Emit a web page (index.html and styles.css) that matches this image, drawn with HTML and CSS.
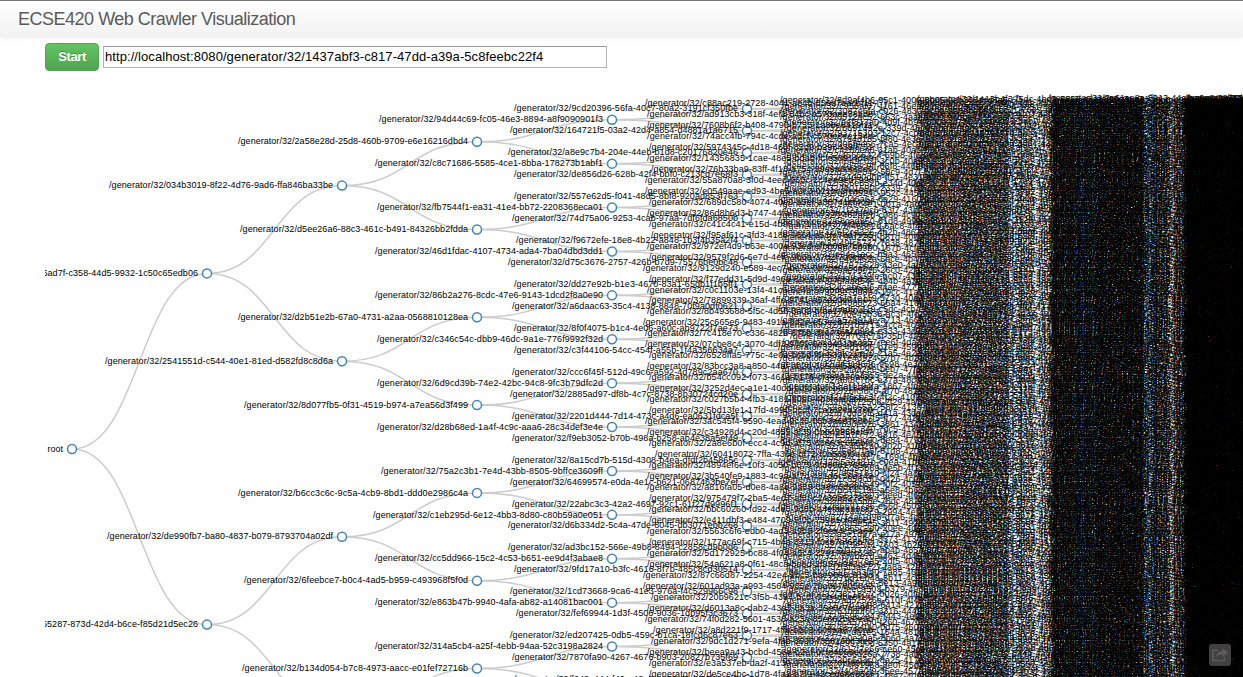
FILE: index.html
```html
<!DOCTYPE html>
<html lang="en">
<head>
<meta charset="utf-8">
<title>ECSE420 Web Crawler Visualization</title>
<link rel="stylesheet" href="styles.css">
</head>
<body>
<header class="navbar"><span class="brand">ECSE420 Web Crawler Visualization</span></header>
<main class="container">
  <form class="controls">
    <button class="btn" type="button">Start</button>
    <input class="url" type="text" spellcheck="false" value="http://localhost:8080/generator/32/1437abf3-c817-47dd-a39a-5c8feebc22f4">
  </form>
  <svg class="tree" width="1198" height="606" viewBox="45 71 1198 606"></svg>
</main>
<button class="share" type="button" aria-label="Share">
  <svg width="16" height="14" viewBox="0 0 16 14"><path d="M6 2.200H1v10.300h11.500V9.500" fill="none" stroke="currentColor" stroke-width="1.6"/><path d="M10.500 0 16 4.500 10.500 9V6.500C7.500 6.300 5.500 7.500 4 9.500 4.300 5.500 6.500 3 10.500 2.700Z" fill="currentColor"/></svg>
</button>
<script src="tree.js"></script>
</body>
</html>
```

FILE: styles.css
```css
html, body { height: 100%; }
body {
  margin: 0;
  overflow: hidden;
  background: #fff;
  font-family: "Liberation Sans", Arial, sans-serif;
}
.navbar {
  box-sizing: border-box;
  height: 37px;
  padding: 0 18px;
  border-top: 1px solid #777;
  background: linear-gradient(#fff, #f2f2f2);
  box-shadow: 0 1px 5px rgba(0, 0, 0, .065);
  line-height: 37px;
}
.brand {
  display: block;
  color: #5a5a5a;
  font-size: 18px;
  letter-spacing: -.49px;
  white-space: nowrap;
}
.container { padding-left: 45px; }
.controls {
  display: flex;
  align-items: center;
  gap: 4px;
  height: 28px;
  margin: 0;
  padding-top: 6px;
}
.btn {
  box-sizing: border-box;
  width: 54px;
  height: 28px;
  padding: 0 0 2px;
  border: 1px solid #51a351;
  border-radius: 4px;
  background: linear-gradient(#62c462, #51a351);
  color: #fff;
  font: bold 13px "Liberation Sans", Arial, sans-serif;
  letter-spacing: -.4px;
  text-shadow: 0 -1px 0 rgba(0, 0, 0, .25);
}
.url {
  box-sizing: border-box;
  width: 504px;
  height: 22px;
  padding: 0 1px 2px;
  border: 1px solid #b3b3b3;
  border-top-color: #999;
  background: #fff;
  color: #000;
  font: 13px "Liberation Sans", Arial, sans-serif;
  letter-spacing: .075px;
}
.tree { display: block; overflow: hidden; }
.link { fill: none; stroke: #ccc; stroke-width: 1.5px; }
.node circle { fill: #fff; stroke: steelblue; stroke-width: 1.5px; }
.node text {
  font: 9px "Liberation Sans", Arial, sans-serif;
  text-anchor: end;
  fill: #000;
}
.share {
  position: absolute;
  left: 1209px;
  top: 644px;
  display: flex;
  align-items: center;
  justify-content: center;
  width: 22px;
  height: 22px;
  padding: 0;
  border: 0;
  border-radius: 3px;
  background: #414141;
  color: #5c5c5c;
}
```

FILE: tree.js
```js
// Known page ids per tree level, top to bottom. A trailing ":n" fixes the
// number of "f" digits in the generated remainder of the id.
const ids = [
  ['root'],
  ['2e56ad7f-c358-44d5-9932-1c50c65edb06', 'c1a55287-873d-42d4-b6ce-f85d21d5ec26'],
  ['034b3019-8f22-4d76-9ad6-ffa846ba33be', '2541551d-c544-40e1-81ed-d582fd8c8d6a', 'de990fb7-ba80-4837-b079-8793704a02df'],
  ['2a58e28d-25d8-460b-9709-e6e16216dbd4', 'd5ee26a6-88c3-461c-b491-84326bb2fdda', 'd2b51e2b-67a0-4731-a2aa-0568810128ea', '8d077fb5-0f31-4519-b974-a7ea56d3f499', 'b6cc3c6c-9c5a-4cb9-8bd1-ddd0e2986c4a', '6feebce7-b0c4-4ad5-b959-c493968f5f0d', 'b134d054-b7c8-4973-aacc-e01fef72716b'],
  ['94d44c69-fc05-46e3-8894-a8f9090901f3', 'c8c71686-5585-4ce1-8bba-178273b1abf1', 'fb7544f1-ea31-41e4-bb72-2208368eca01', '46d1fdac-4107-4734-ada4-7ba04dbd3dd1', '86b2a276-8cdc-47e6-9143-1dcd2f8a0e90', 'c346c54c-dbb9-46dc-9a1e-776f9992f32d', '6d9cd39b-74e2-42bc-94c8-9fc3b79dfc2d', 'd28b68ed-1a4f-4c9c-aaa6-28c34def3e4e', '75a2c3b1-7e4d-43bb-8505-9bffce3609ff', 'c1eb295d-6e12-4bb3-8d80-c80b59a0e051', 'cc5dd966-15c2-4c53-b651-ee9d4f3abae8', 'e863b47b-9940-4afa-ab82-a14081bac001', '314a5cb4-a25f-4ebb-94aa-52c3198a2824'],
  ['9cd20396-56fa-40c7-80a2-3191cf350fbe', '164721f5-03a2-42d4-a854-d4881a1a6715', 'a8e9c7b4-204e-44eb-b1d8-c20176820e46', 'de856d26-628b-42f4-bbf0-c213cd7e68f3', '557e62d5-f041-48d5-8bf8-920ad853f763', '74d75a06-9253-4cab-97aa-7df6fda6850b', 'f9672efe-18e8-4b22-a848-1b3f4b35a2f4', 'd75c3676-2757-426b-b7d9-75576be0bc48', 'dd27e92b-b1e3-4670-83a1-65db1f1b5ff1', 'a6daac63-35c4-4138-8848-70f9a0df0621', '8f0f4075-b1c4-4e06-a60c-ab9722f7ae73', 'c3f44106-54cc-454f-a55b-1f4a356634a7', 'ccc6f45f-512d-49c6-a592-4d789c2aa670', '2885ad97-df8b-4c7c-8738-8b30724cd20e', '2201d444-7d14-473c-a4d6-ea0631fdca5f', 'f9eb3052-b70b-498a-b258-ab4e38a5ef49', '8a15cd7b-515d-4308-b4ea-dfdf2b45865c', '64699574-e0da-4e1c-b621-0687463be7ef', '22abc3c3-42a2-4697-92c1-61f27d9996f1', 'd6b334d2-5c4a-47de-8045-db3071ebb268', 'ad3bc152-566e-49b8-8494-c2858cd9b0d6', '9fd17a10-b3fc-4616-8f7b-485c8cd30514', '1cd73668-9ca6-41e3-976a-f4c529966c98', 'fef69944-1d3f-4506-9036-1db95f3c3673', 'ed207425-0db5-459c-b1ca-18fcd6c87e63', '7870fa90-4267-4676-b903-20827b735f69', 'f240c444-f40a:3'],
  ['c88ac219-2728-40:1', 'ad913cb3-318f-4ef:2', '7608b6f2-b408-479:2', '74acc4fb-794c-4cd:2', '5974345c-4d18-46:3', '14356835-1cae-48:2', '76b33ba9-83ff-4f1:4', '55a870a8-3f0d-4ee:1', 'e0549aae-ed93-4be:1', '689dc580-4074-40:3', '86d8b6d3-b747-44:2', 'c41c4c41-e15d-4b9:3', 'f95af61c-3fd3-418:4', '972ef4d9-b63e-400:2', '9579f2d6-6e7d-4ef:3', '9129d240-e589-4ec:0', 'f77edd31-5d9d-496:3', 'c0c1103e-13f4-41c:2', '78899339-36af-4f:3', '8b493688-5f5c-4d5:2', '25c665e6-9483-491:0', '7c418e70-c336-482:1', '07cbe8c4-3070-4df:1', '6528ffa5-775c-4e0:3', '83bcc3a8-a850-44a:2', 'b54cc092-f073-461:3', '3252d4ec-a1e1-40:2', 'c027b5b4-4fb3-41:2', '5bd13fe1-17fd-499:3', '3ac545f4-9590-4ea:1', 'c34928d4-c20d-485:2', '2a8e6b0f-ecc4-4c9:3', '60418072-7ffa-436:6', '4894ef6e-10f3-405:3', '3b540fe9-1883-4c9:2', 'a816fa05-d0e8-4a8:2', '975479f7-2ba5-4ed:3', 'bbc60260-fd92-4de:3', 'e411dbf3-e484-470:3', '5563c6f6-edb0-4ad:2', '177ac69f-c715-4b4:3', '5d172925-bc88-4f0:2', '54a621a8-0f61-48c:2', '87c66d87-2254-42e:0', '601ad93a-a993-456:0', '20b9621c-3f5b-439:4', 'd6013a8c-dab2-43a:2', '74f0d282-5601-453:1', 'a8d221f9-1717-4ff:5', '9dc1d271-9efa-4f8:4', 'beea9a43-bcbd-458:2', 'e3a537eb-da2f-41:3', 'de5ce4bc-1d78-4fa:3'],
  ['8d9af4b6-95c1-40']
];

let seed = 420;
const rnd = n => {
  seed = (seed * 1664525 + 1013904223) >>> 0;
  return Math.floor(seed / 4294967296 * n);
};

// Completes a partial id to the full 8-4-4-4-12 form.
function complete(spec) {
  const [head, count] = (spec || '').split(':');
  const tmpl = 'xxxxxxxx-xxxx-4xxx-yxxx-xxxxxxxxxxxx';
  const out = head.split('');
  const open = [];
  for (let i = out.length; i < 36; i++) {
    const t = tmpl[i];
    if (t === 'x') {
      open.push(i);
      out.push('0123456789abcdef'[rnd(count === undefined ? 16 : 15)]);
    } else out.push(t === 'y' ? '89ab'[rnd(4)] : t);
  }
  if (count !== undefined) {
    let need = count - (head.match(/f/g) || []).length;
    while (need-- > 0 && open.length) out[open.splice(rnd(open.length), 1)[0]] = 'f';
  }
  return out.join('');
}

// Whole-pixel advance widths of the 9px label face.
const advance = s => [...s].reduce((w, c) => w + ('/-frt'.includes(c) ? 3 : 5), 0);

const DEPTH = 10, TOP = 97.8, SPAN = 702.4;
const px = d => 72 + 135 * d;
const py = (d, k) => TOP + SPAN * (k + .5) / 2 ** d;
const links = [], nodes = [];

// Level by level, so that deeper labels lie over the circles before them.
for (let d = 0; d <= DEPTH; d++) {
  for (let k = 0; k < 2 ** d; k++) {
    const x = px(d), y = py(d, k);
    if (y < 700) {
      const label = d ? '/generator/32/' + complete(ids[d] && ids[d][k]) : 'root';
      const len = d ? ` textLength="${advance(label)}"` : '';
      // Baselines sit on whole pixels.
      nodes.push(`<g class="node"><circle cx="${x}" cy="${y.toFixed(2)}" r="4.5"/><text x="${x - 9}" y="${Math.floor(y + 3.15)}"${len}>${label}</text></g>`);
    }
    if (d === DEPTH) continue;
    for (const c of [2 * k, 2 * k + 1]) {
      const x2 = px(d + 1), y2 = py(d + 1, c), m = (x + x2) / 2;
      links.push(`<path class="link" d="M${x},${y}C${m},${y} ${m},${y2} ${x2},${y2}"/>`);
    }
  }
}
document.querySelector('.tree').innerHTML = links.join('') + nodes.join('');
```
